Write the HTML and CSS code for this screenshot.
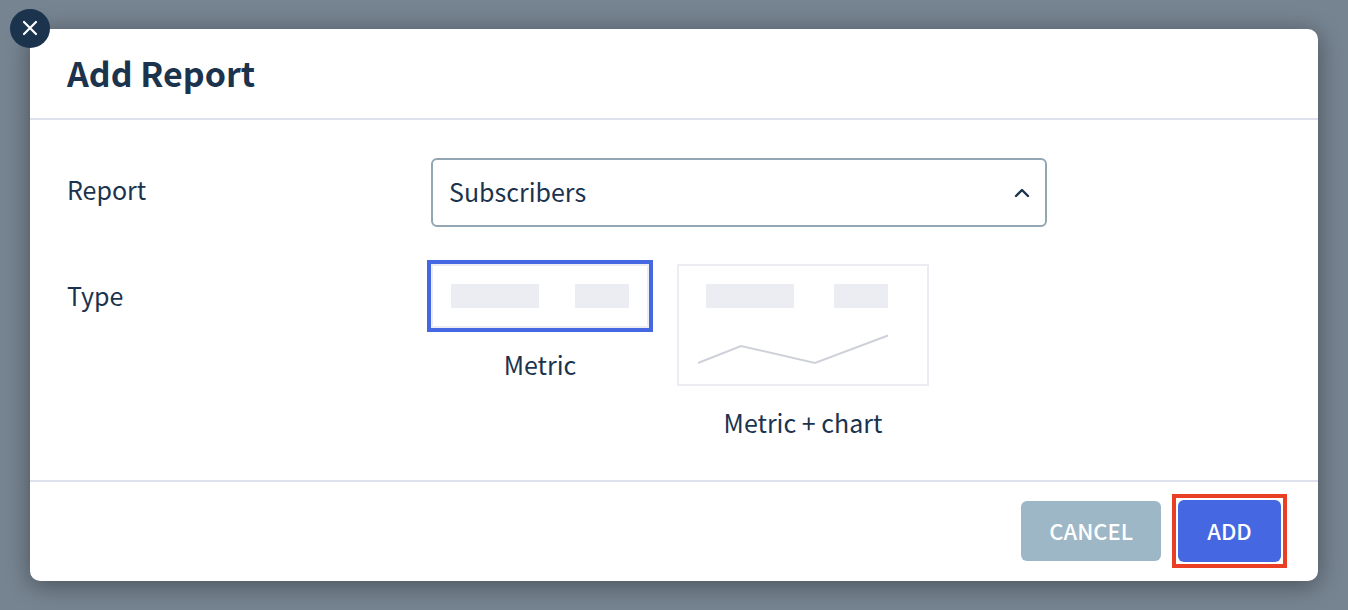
FILE: index.html
```html
<!DOCTYPE html>
<html lang="en">
<head>
  <meta charset="UTF-8">
  <meta name="viewport" content="width=device-width, initial-scale=1.0">
  <title>Add Report</title>
  <link rel="stylesheet" href="styles.css">
</head>
<body>

  <form class="modal" role="dialog" aria-labelledby="modal-title">
    <button type="button" class="close" aria-label="Close">
      <svg width="16" height="17" viewBox="0 0 16 17">
        <path d="M2 2L14 14M14 2L2 14" fill="none" stroke="#fff" stroke-width="2.2" stroke-linecap="round"/>
      </svg>
    </button>

    <header class="modal-header">
      <h1 id="modal-title">Add Report</h1>
    </header>

    <div class="modal-body">
      <label class="field-label" for="report">Report</label>
      <div class="select">
        <select id="report">
          <option>Subscribers</option>
        </select>
        <svg class="chevron" width="16" height="10" viewBox="0 0 16 10">
          <path d="M2 8L8 2L14 8" fill="none" stroke="#1b334d" stroke-width="2.4" stroke-linecap="round" stroke-linejoin="round"/>
        </svg>
      </div>

      <span class="field-label" id="type-label">Type</span>
      <div class="types" role="radiogroup" aria-labelledby="type-label">
        <label class="type">
          <input type="radio" name="type" value="metric" checked>
          <svg class="preview" width="218" height="64" viewBox="0 0 218 64">
            <rect x="1" y="1" width="216" height="62" fill="#fff" stroke="#ecedf3" stroke-width="2"/>
            <rect x="20" y="20" width="88" height="24" fill="#ecedf3"/>
            <rect x="144" y="20" width="54" height="24" fill="#ecedf3"/>
          </svg>
          <span>Metric</span>
        </label>
        <label class="type">
          <input type="radio" name="type" value="chart">
          <svg class="preview" width="252" height="122" viewBox="0 0 252 122">
            <rect x="1" y="1" width="250" height="120" fill="#fff" stroke="#ecedf3" stroke-width="2"/>
            <rect x="29" y="20" width="88" height="24" fill="#ecedf3"/>
            <rect x="157" y="20" width="54" height="24" fill="#ecedf3"/>
            <path d="M21 99L64 82L138 99L211 71.500" fill="none" stroke="#cfd1d9" stroke-width="2"/>
          </svg>
          <span>Metric + chart</span>
        </label>
      </div>
    </div>

    <footer class="modal-footer">
      <button type="button" class="btn btn-cancel">CANCEL</button>
      <div class="highlight">
        <button type="submit" class="btn btn-add">ADD</button>
      </div>
    </footer>
  </form>

</body>
</html>
```

FILE: styles.css
```css
* {
  box-sizing: border-box;
}

body {
  margin: 0;
  padding: 29px 30px;
  background-color: #768491;
  color: #1b334d;
  font-family: "Noto Sans CJK SC", "Open Sans", sans-serif;
  font-size: 25px;
  line-height: 36px;
}

.modal {
  position: relative;
  background-color: #fff;
  border-radius: 10px;
  box-shadow: 0 4px 24px rgba(0, 0, 0, 0.4);
}

.close {
  position: absolute;
  top: -20px;
  left: -20px;
  display: flex;
  align-items: center;
  justify-content: center;
  width: 40px;
  height: 39px;
  padding: 0;
  border: none;
  border-radius: 50%;
  background-color: #1b334d;
  cursor: pointer;
}

.modal-header {
  padding: 19px 37px 21px;
  border-bottom: 2px solid #dde1ed;
}

h1 {
  margin: 0;
  font-size: 34px;
  font-weight: 700;
  line-height: 49px;
}

.modal-body {
  display: grid;
  grid-template-columns: 364px minmax(0, 616px);
  row-gap: 37px;
  padding: 38px 37px 40px;
}

.field-label {
  padding-top: 13px;
}

.select {
  position: relative;
}

.select select {
  display: block;
  width: 100%;
  height: 69px;
  padding: 0 48px 4px 16px;
  border: 2px solid #92a6b4;
  border-radius: 6px;
  background-color: #fff;
  color: inherit;
  font: inherit;
  appearance: none;
}

.chevron {
  position: absolute;
  top: 30px;
  right: 17px;
  pointer-events: none;
}

.types {
  display: flex;
  align-items: flex-start;
  gap: 28px;
}

.type {
  display: flex;
  flex-direction: column;
  align-items: center;
  gap: 18px;
  cursor: pointer;
}

.type input {
  position: absolute;
  opacity: 0;
}

.type input:checked + .preview {
  outline: 4px solid #4568e2;
}

.modal-footer {
  display: flex;
  align-items: center;
  justify-content: flex-end;
  gap: 11px;
  padding: 12px 31px 13px;
  border-top: 2px solid #dde1ed;
}

.btn {
  display: block;
  min-width: 103px;
  height: 60px;
  padding: 0 28px 3px;
  border: none;
  border-radius: 6px;
  color: #fff;
  font-family: inherit;
  font-size: 22px;
  font-weight: 500;
  cursor: pointer;
}

.btn-cancel {
  background-color: #9db7c6;
}

.btn-add {
  height: 62px;
  background-color: #4568e2;
}

.highlight {
  padding: 2px;
  border: 4px solid #ea3f25;
}
```
